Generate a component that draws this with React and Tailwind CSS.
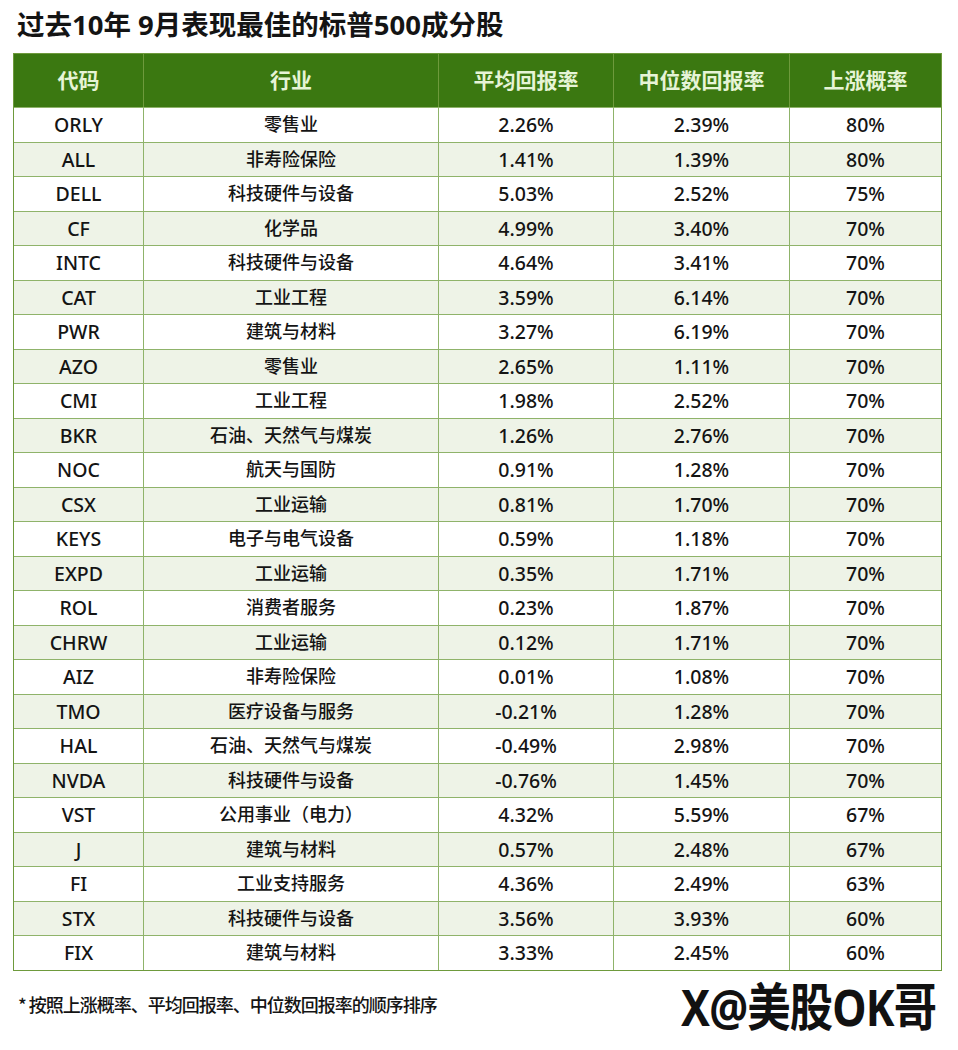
const rows = [
  ["ORLY", "零售业", "2.26%", "2.39%", "80%"],
  ["ALL", "非寿险保险", "1.41%", "1.39%", "80%"],
  ["DELL", "科技硬件与设备", "5.03%", "2.52%", "75%"],
  ["CF", "化学品", "4.99%", "3.40%", "70%"],
  ["INTC", "科技硬件与设备", "4.64%", "3.41%", "70%"],
  ["CAT", "工业工程", "3.59%", "6.14%", "70%"],
  ["PWR", "建筑与材料", "3.27%", "6.19%", "70%"],
  ["AZO", "零售业", "2.65%", "1.11%", "70%"],
  ["CMI", "工业工程", "1.98%", "2.52%", "70%"],
  ["BKR", "石油、天然气与煤炭", "1.26%", "2.76%", "70%"],
  ["NOC", "航天与国防", "0.91%", "1.28%", "70%"],
  ["CSX", "工业运输", "0.81%", "1.70%", "70%"],
  ["KEYS", "电子与电气设备", "0.59%", "1.18%", "70%"],
  ["EXPD", "工业运输", "0.35%", "1.71%", "70%"],
  ["ROL", "消费者服务", "0.23%", "1.87%", "70%"],
  ["CHRW", "工业运输", "0.12%", "1.71%", "70%"],
  ["AIZ", "非寿险保险", "0.01%", "1.08%", "70%"],
  ["TMO", "医疗设备与服务", "-0.21%", "1.28%", "70%"],
  ["HAL", "石油、天然气与煤炭", "-0.49%", "2.98%", "70%"],
  ["NVDA", "科技硬件与设备", "-0.76%", "1.45%", "70%"],
  ["VST", "公用事业（电力）", "4.32%", "5.59%", "67%"],
  ["J", "建筑与材料", "0.57%", "2.48%", "67%"],
  ["FI", "工业支持服务", "4.36%", "2.49%", "63%"],
  ["STX", "科技硬件与设备", "3.56%", "3.93%", "60%"],
  ["FIX", "建筑与材料", "3.33%", "2.45%", "60%"],
];

const headers = ["代码", "行业", "平均回报率", "中位数回报率", "上涨概率"];
const widths = ["w-[130px]", "w-[295px]", "w-[175px]", "w-[176px]", "flex-1"];
const font = { fontFamily: "'Noto Sans', 'Noto Sans CJK SC', sans-serif" };

export default function App() {
  return (
    <div className="w-[958px] h-[1050px] bg-white text-[#141414]" style={font}>
      <h1 className="pl-[17px] pt-[7px] h-[53px] text-[27.5px] font-bold leading-[36px]">
        过去10年 9月表现最佳的标普500成分股
      </h1>
      <div className="ml-[13px] w-[929px] border border-[#6e9a3c]">
        <div className="flex h-[53px] bg-[#3b7811] text-[#e6f4d6] text-[21px] font-bold">
          {headers.map((h, i) => (
            <div
              key={h}
              className={`${widths[i]} flex items-center justify-center ${i < 4 ? "border-r border-[#6e9a3c]" : ""}`}
            >
              {h}
            </div>
          ))}
        </div>
        {rows.map((r, ri) => (
          <div
            key={r[0]}
            className={`flex h-[34.5px] border-t border-[#8fb36a] ${ri % 2 ? "bg-[#eef3e7]" : "bg-white"}`}
          >
            {r.map((c, i) => (
              <div
                key={i}
                className={`${widths[i]} flex items-center justify-center font-medium ${i === 1 ? "text-[18px]" : "text-[19.5px]"} ${i < 4 ? "border-r border-[#8fb36a]" : ""}`}
              >
                {c}
              </div>
            ))}
          </div>
        ))}
      </div>
      <div className="flex items-start justify-between pl-[18px] pr-[22px] pt-[12px]">
        <p
          className="text-[18px] font-medium tracking-[-1px] pt-[8px]"
          style={{ fontFamily: "'Liberation Sans Narrow', 'Noto Sans CJK SC', sans-serif" }}
        >
          * 按照上涨概率、平均回报率、中位数回报率的顺序排序
        </p>
        <p className="text-[51px] font-bold leading-[52px] tracking-[-1px] text-[#111] origin-right scale-x-[0.85] -mt-[3px]">
          X@美股OK哥
        </p>
      </div>
    </div>
  );
}
